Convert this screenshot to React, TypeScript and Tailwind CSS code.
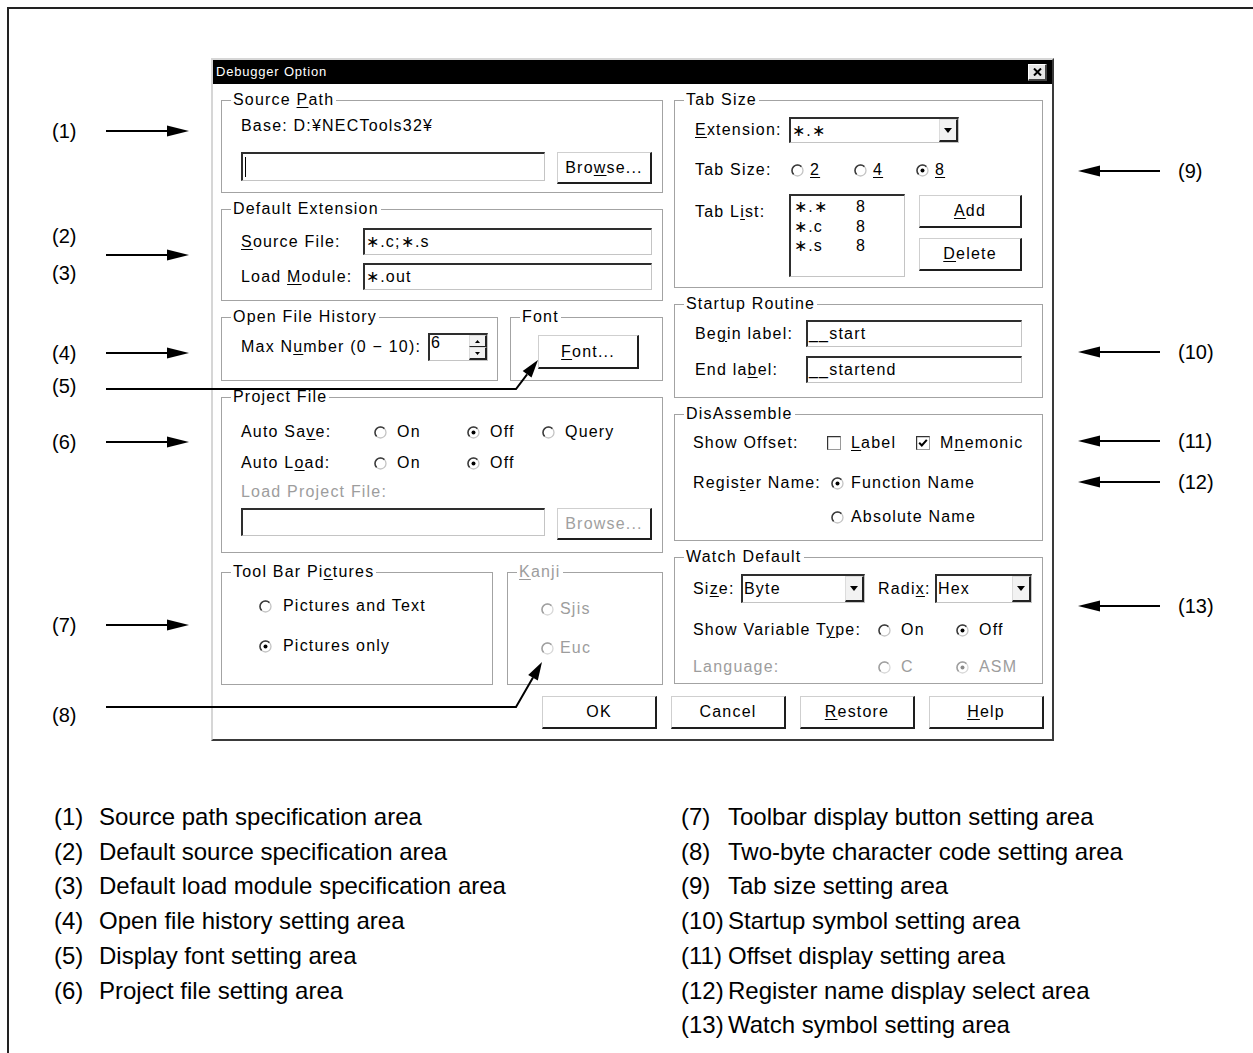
import React from "react";

const U = ({ children }: { children: React.ReactNode }) => (
  <span className="underline underline-offset-[2px] decoration-1">{children}</span>
);

function ArrowR() {
  return (
    <svg width="83" height="12" viewBox="0 0 83 12" className="shrink-0">
      <line x1="0" y1="6" x2="64" y2="6" stroke="#000" strokeWidth="2" />
      <path d="M61 0.5 L83 6 L61 11.5 Z" fill="#000" />
    </svg>
  );
}

function ArrowL() {
  return (
    <svg width="83" height="12" viewBox="0 0 83 12" className="shrink-0">
      <line x1="19" y1="6" x2="82" y2="6" stroke="#000" strokeWidth="2" />
      <path d="M22 0.5 L0 6 L22 11.5 Z" fill="#000" />
    </svg>
  );
}

function RadioIcon({ checked, disabled }: { checked?: boolean; disabled?: boolean }) {
  return (
    <svg width="13" height="13" viewBox="0 0 13 13" className="shrink-0">
      <circle cx="6.5" cy="6.5" r="5.5" fill="#fff" stroke={disabled ? "#d8d8d8" : "#c4c4c4"} strokeWidth="1.3" />
      <path d="M10.4 2.6 A5.5 5.5 0 0 0 2.6 10.4" fill="none" stroke={disabled ? "#a0a0a0" : "#3a3a3a"} strokeWidth="1.5" />
      {checked && <circle cx="6.5" cy="6.5" r="2" fill={disabled ? "#8a8a8a" : "#000"} />}
    </svg>
  );
}

function CheckIcon({ checked }: { checked?: boolean }) {
  return (
    <svg width="14" height="14" viewBox="0 0 14 14" className="shrink-0">
      <rect x="0.5" y="0.5" width="13" height="13" fill="#fff" stroke="#9a9a9a" />
      <path d="M0.5 13.5 V0.5 H13.5" fill="none" stroke="#333" strokeWidth="1.4" />
      {checked && <path d="M3.2 6.8 L5.8 9.5 L10.8 3.8" fill="none" stroke="#000" strokeWidth="2" />}
    </svg>
  );
}

function RadioItem({
  checked,
  disabled,
  label,
  className,
  gap,
}: {
  checked?: boolean;
  disabled?: boolean;
  label: React.ReactNode;
  className?: string;
  gap?: string;
}) {
  return (
    <div className={"flex items-center whitespace-nowrap " + (className ?? "")}>
      <RadioIcon checked={checked} disabled={disabled} />
      <span className={(gap ?? "ml-[10px]") + (disabled ? " text-[#9d9d9d]" : "")}>{label}</span>
    </div>
  );
}

function CheckItem({ checked, label, className }: { checked?: boolean; label: React.ReactNode; className?: string }) {
  return (
    <div className={"flex items-center whitespace-nowrap " + (className ?? "")}>
      <CheckIcon checked={checked} />
      <span className="ml-[10px]">{label}</span>
    </div>
  );
}

function Sunken({ className, children }: { className?: string; children?: React.ReactNode }) {
  return (
    <div
      className={
        "bg-white border-t-2 border-l-2 border-r border-b border-t-[#2e2e2e] border-l-[#2e2e2e] border-r-[#c4c4c4] border-b-[#c4c4c4] " +
        (className ?? "")
      }
    >
      {children}
    </div>
  );
}

function Field({ className, children, caret }: { className?: string; children?: React.ReactNode; caret?: boolean }) {
  return (
    <Sunken className={"flex items-center pl-[1px] whitespace-nowrap shrink-0 " + (className ?? "")}>
      {caret && <div className="w-[1px] h-[20px] bg-black ml-[1px]" />}
      {children}
    </Sunken>
  );
}

function DropBtn() {
  return (
    <div className="h-full w-[19px] shrink-0 bg-[#f2f2f2] border-t border-l border-t-[#dcdcdc] border-l-[#dcdcdc] border-r-2 border-b-2 border-r-[#222] border-b-[#222] flex items-center justify-center">
      <svg width="8" height="5" viewBox="0 0 8 5">
        <path d="M0 0 H8 L4 5 Z" fill="#000" />
      </svg>
    </div>
  );
}

function Combo({ value, className }: { value: string; className?: string }) {
  return (
    <Sunken className={"flex items-center justify-between shrink-0 " + (className ?? "")}>
      <span className="pl-[1px] whitespace-nowrap">{value}</span>
      <DropBtn />
    </Sunken>
  );
}

function Spinner() {
  return (
    <Sunken className="w-[60px] h-[28px] flex justify-between shrink-0">
      <span className="pl-[1px] leading-[16px]">6</span>
      <div className="w-[18px] h-full flex flex-col">
        <div className="flex-1 bg-[#f2f2f2] border-t border-l border-t-[#dcdcdc] border-l-[#dcdcdc] border-r-2 border-b border-r-[#222] border-b-[#222] flex items-center justify-center">
          <svg width="5" height="3" viewBox="0 0 5 3">
            <path d="M0 3 H5 L2.5 0 Z" fill="#000" />
          </svg>
        </div>
        <div className="flex-1 bg-[#f2f2f2] border-t border-l border-t-[#dcdcdc] border-l-[#dcdcdc] border-r-2 border-b-2 border-r-[#222] border-b-[#222] flex items-center justify-center">
          <svg width="5" height="3" viewBox="0 0 5 3">
            <path d="M0 0 H5 L2.5 3 Z" fill="#000" />
          </svg>
        </div>
      </div>
    </Sunken>
  );
}

function Btn({ children, className, disabled }: { children: React.ReactNode; className?: string; disabled?: boolean }) {
  return (
    <div
      className={
        "flex items-center justify-center shrink-0 whitespace-nowrap bg-white border-t border-l border-t-[#cfcfcf] border-l-[#cfcfcf] border-r-2 border-b-2 border-r-[#1e1e1e] border-b-[#1e1e1e] " +
        (disabled ? "text-[#a0a0a0] " : "") +
        (className ?? "")
      }
    >
      {children}
    </div>
  );
}

function Group({
  title,
  className,
  children,
  disabled,
}: {
  title: React.ReactNode;
  className?: string;
  children?: React.ReactNode;
  disabled?: boolean;
}) {
  return (
    <div className={"relative border border-[#a3a3a3] shrink-0 " + (className ?? "")}>
      <span
        className={
          "absolute left-[9px] top-[-10px] bg-white px-[2px] leading-[18px] whitespace-nowrap " +
          (disabled ? "text-[#9d9d9d]" : "")
        }
      >
        {title}
      </span>
      {children}
    </div>
  );
}

function Dialog() {
  return (
    <div className="w-[843px] h-[683px] shrink-0 flex flex-col bg-white border-2 border-t-[#d6d6d6] border-l-[#d6d6d6] border-r-[#3a3a3a] border-b-[#3a3a3a] text-[16px] tracking-[1.2px] leading-[18px] font-['Liberation_Sans',Arial,sans-serif]">
      <div className="h-[24px] bg-black flex items-center justify-between pl-[3px] pr-[5px]">
        <span className="text-white text-[13px] tracking-[0.8px]">Debugger Option</span>
        <div className="w-[19px] h-[17px] bg-[#e6e6e6] border-t border-l border-t-white border-l-white border-r-2 border-b-2 border-r-[#444] border-b-[#444] flex items-center justify-center">
          <svg width="9" height="8" viewBox="0 0 9 8">
            <path d="M1 0.5 L8 7.5 M8 0.5 L1 7.5" stroke="#000" strokeWidth="2" />
          </svg>
        </div>
      </div>
      <div className="flex-1 px-[8px]">
        <div className="flex gap-[11px] mt-[16px]">
          {/* left column */}
          <div className="w-[442px] flex flex-col">
            <Group
              title={
                <>
                  Source <U>P</U>ath
                </>
              }
              className="h-[93px] pt-[16px] pl-[19px]"
            >
              <div className="whitespace-nowrap">Base: D:¥NECTools32¥</div>
              <div className="flex items-start gap-[12px] mt-[17px]">
                <Field className="w-[304px] h-[29px]" caret />
                <Btn className="w-[95px] h-[32px]">
                  Bro<U>w</U>se...
                </Btn>
              </div>
            </Group>

            <Group title="Default Extension" className="mt-[16px] h-[92px] pt-[18px] pl-[19px]">
              <div className="flex items-center h-[27px]">
                <span className="w-[122px] whitespace-nowrap">
                  <U>S</U>ource File:
                </span>
                <Field className="w-[289px] h-[27px]">∗.c;∗.s</Field>
              </div>
              <div className="flex items-center h-[27px] mt-[8px]">
                <span className="w-[122px] whitespace-nowrap">
                  Load <U>M</U>odule:
                </span>
                <Field className="w-[289px] h-[27px]">∗.out</Field>
              </div>
            </Group>

            <div className="flex gap-[12px] mt-[16px] h-[64px]">
              <Group title="Open File History" className="w-[277px] h-full pt-[15px] pl-[19px]">
                <div className="flex items-center">
                  <span className="w-[187px] whitespace-nowrap">
                    Max N<U>u</U>mber (0 − 10):
                  </span>
                  <Spinner />
                </div>
              </Group>
              <Group title="Font" className="flex-1 h-full pt-[17px] pl-[27px]">
                <Btn className="w-[101px] h-[34px]">
                  <U>F</U>ont...
                </Btn>
              </Group>
            </div>

            <Group title="Project File" className="mt-[16px] h-[156px] pt-[25px] pl-[19px]">
              <div className="flex items-center h-[18px]">
                <span className="w-[133px] whitespace-nowrap">
                  Auto Sa<U>v</U>e:
                </span>
                <RadioItem className="w-[93px]" label="On" />
                <RadioItem className="w-[75px]" checked label="Off" />
                <RadioItem label="Query" />
              </div>
              <div className="flex items-center h-[18px] mt-[13px]">
                <span className="w-[133px] whitespace-nowrap">
                  Auto L<U>o</U>ad:
                </span>
                <RadioItem className="w-[93px]" label="On" />
                <RadioItem checked label="Off" />
              </div>
              <div className="h-[18px] mt-[11px] text-[#9d9d9d] whitespace-nowrap">Load Project File:</div>
              <div className="flex items-start gap-[12px] mt-[7px]">
                <Field className="w-[304px] h-[28px]" />
                <Btn disabled className="w-[95px] h-[32px]">
                  Browse...
                </Btn>
              </div>
            </Group>

            <div className="flex gap-[14px] mt-[19px] h-[113px]">
              <Group
                title={
                  <>
                    Tool Bar Pi<U>c</U>tures
                  </>
                }
                className="w-[272px] h-full pt-[24px] pl-[37px]"
              >
                <RadioItem className="h-[18px]" gap="ml-[11px]" label="Pictures and Text" />
                <RadioItem className="h-[18px] mt-[22px]" gap="ml-[11px]" checked label="Pictures only" />
              </Group>
              <Group
                disabled
                title={
                  <>
                    <U>K</U>anji
                  </>
                }
                className="flex-1 h-full pt-[27px] pl-[33px]"
              >
                <RadioItem className="h-[18px]" disabled gap="ml-[6px]" label="Sjis" />
                <RadioItem className="h-[18px] mt-[21px]" disabled gap="ml-[6px]" label="Euc" />
              </Group>
            </div>
          </div>

          {/* right column */}
          <div className="w-[369px] flex flex-col">
            <Group title="Tab Size" className="h-[188px] pt-[16px] pl-[20px]">
              <div className="flex items-center h-[26px]">
                <span className="w-[94px] whitespace-nowrap">
                  <U>E</U>xtension:
                </span>
                <Combo className="w-[170px] h-[26px]" value="∗.∗" />
              </div>
              <div className="flex items-center h-[18px] mt-[18px]">
                <span className="w-[96px] whitespace-nowrap">Tab Size:</span>
                <RadioItem className="w-[63px]" gap="ml-[6px]" label={<U>2</U>} />
                <RadioItem className="w-[62px]" gap="ml-[6px]" label={<U>4</U>} />
                <RadioItem checked gap="ml-[6px]" label={<U>8</U>} />
              </div>
              <div className="flex mt-[15px]">
                <span className="w-[94px] mt-[9px] whitespace-nowrap">
                  Tab L<U>i</U>st:
                </span>
                <Sunken className="w-[116px] h-[83px] pl-[3px] pt-[1px] leading-[19.5px] shrink-0">
                  {[
                    ["∗.∗", "8"],
                    ["∗.c", "8"],
                    ["∗.s", "8"],
                  ].map(([a, b]) => (
                    <div key={a} className="flex">
                      <span className="w-[62px]">{a}</span>
                      <span>{b}</span>
                    </div>
                  ))}
                </Sunken>
                <div className="flex flex-col ml-[14px] gap-[10px] pt-[1px]">
                  <Btn className="w-[103px] h-[33px]">
                    <U>A</U>dd
                  </Btn>
                  <Btn className="w-[103px] h-[33px]">
                    <U>D</U>elete
                  </Btn>
                </div>
              </div>
            </Group>

            <Group title="Startup Routine" className="mt-[16px] h-[94px] pt-[15px] pl-[20px]">
              <div className="flex items-center h-[27px]">
                <span className="w-[111px] whitespace-nowrap">
                  Be<U>g</U>in label:
                </span>
                <Field className="w-[216px] h-[27px]">__start</Field>
              </div>
              <div className="flex items-center h-[27px] mt-[9px]">
                <span className="w-[111px] whitespace-nowrap">
                  End la<U>b</U>el:
                </span>
                <Field className="w-[216px] h-[27px]">__startend</Field>
              </div>
            </Group>

            <Group title="DisAssemble" className="mt-[16px] h-[127px] pt-[19px] pl-[18px]">
              <div className="flex items-center h-[18px]">
                <span className="w-[134px] whitespace-nowrap">Show Offset:</span>
                <CheckItem
                  className="w-[89px]"
                  label={
                    <>
                      <U>L</U>abel
                    </>
                  }
                />
                <CheckItem
                  checked
                  label={
                    <>
                      M<U>n</U>emonic
                    </>
                  }
                />
              </div>
              <div className="flex items-center h-[18px] mt-[22px]">
                <span className="w-[138px] whitespace-nowrap">
                  Regis<U>t</U>er Name:
                </span>
                <RadioItem checked gap="ml-[7px]" label="Function Name" />
              </div>
              <div className="flex items-center h-[18px] mt-[16px] pl-[138px]">
                <RadioItem gap="ml-[7px]" label="Absolute Name" />
              </div>
            </Group>

            <Group title="Watch Default" className="mt-[16px] h-[127px] pt-[16px] pl-[18px]">
              <div className="flex items-center h-[29px]">
                <span className="w-[48px] whitespace-nowrap">
                  Si<U>z</U>e:
                </span>
                <Combo className="w-[124px] h-[29px]" value="Byte" />
                <span className="ml-[13px] w-[57px] whitespace-nowrap">
                  Radi<U>x</U>:
                </span>
                <Combo className="w-[97px] h-[29px]" value="Hex" />
              </div>
              <div className="flex items-center h-[18px] mt-[18px]">
                <span className="w-[185px] whitespace-nowrap">
                  Show Variable T<U>y</U>pe:
                </span>
                <RadioItem className="w-[78px]" label="On" />
                <RadioItem checked label="Off" />
              </div>
              <div className="flex items-center h-[18px] mt-[19px]">
                <span className="w-[185px] whitespace-nowrap text-[#9d9d9d]">Language:</span>
                <RadioItem className="w-[78px]" disabled label="C" />
                <RadioItem disabled checked label="ASM" />
              </div>
            </Group>
          </div>
        </div>

        <div className="flex justify-end gap-[14px] mt-[11px]">
          <Btn className="w-[115px] h-[33px]">OK</Btn>
          <Btn className="w-[115px] h-[33px]">Cancel</Btn>
          <Btn className="w-[115px] h-[33px]">
            <U>R</U>estore
          </Btn>
          <Btn className="w-[115px] h-[33px]">
            <U>H</U>elp
          </Btn>
        </div>
      </div>
    </div>
  );
}

function Note({ label, arrow, className }: { label: string; arrow?: boolean; className?: string }) {
  return (
    <div className={"flex items-center h-[20px] " + (className ?? "")}>
      <span className="w-[54px] leading-[20px]">{label}</span>
      {arrow && <ArrowR />}
    </div>
  );
}

function LeftNotes() {
  return (
    <div className="w-[202px] shrink-0 flex flex-col pl-[43px] text-[20px]">
      <Note className="mt-[63px]" label="(1)" arrow />
      <div className="mt-[85px] flex h-[57px]">
        <div className="w-[54px] flex flex-col justify-between">
          <span className="h-[20px] leading-[20px]">(2)</span>
          <span className="h-[20px] leading-[20px]">(3)</span>
        </div>
        <div className="self-center flex">
          <ArrowR />
        </div>
      </div>
      <Note className="mt-[60px]" label="(4)" arrow />
      <Note className="mt-[13px]" label="(5)" />
      <Note className="mt-[36px]" label="(6)" arrow />
      <Note className="mt-[163px]" label="(7)" arrow />
      <Note className="mt-[70px]" label="(8)" />
    </div>
  );
}

function RNote({ label, className }: { label: string; className?: string }) {
  return (
    <div className={"flex items-center h-[20px] " + (className ?? "")}>
      <ArrowL />
      <span className="ml-[17px] leading-[20px]">{label}</span>
    </div>
  );
}

function RightNotes() {
  return (
    <div className="flex-1 flex flex-col pl-[24px] text-[20px]">
      <RNote className="mt-[103px]" label="(9)" />
      <RNote className="mt-[161px]" label="(10)" />
      <RNote className="mt-[69px]" label="(11)" />
      <RNote className="mt-[21px]" label="(12)" />
      <RNote className="mt-[104px]" label="(13)" />
    </div>
  );
}

const leftItems = [
  ["(1)", "Source path specification area"],
  ["(2)", "Default source specification area"],
  ["(3)", "Default load module specification area"],
  ["(4)", "Open file history setting area"],
  ["(5)", "Display font setting area"],
  ["(6)", "Project file setting area"],
];
const rightItems = [
  ["(7)", "Toolbar display button setting area"],
  ["(8)", "Two-byte character code setting area"],
  ["(9)", "Tab size setting area"],
  ["(10)", "Startup symbol setting area"],
  ["(11)", "Offset display setting area"],
  ["(12)", "Register name display select area"],
  ["(13)", "Watch symbol setting area"],
];

function Legend() {
  return (
    <div className="mt-[59px] flex text-[24px] leading-[34.7px]">
      <div className="w-[672px] pl-[45px]">
        {leftItems.map(([n, t]) => (
          <div key={n} className="flex whitespace-nowrap">
            <span className="w-[45px]">{n}</span>
            <span>{t}</span>
          </div>
        ))}
      </div>
      <div>
        {rightItems.map(([n, t]) => (
          <div key={n} className="flex whitespace-nowrap">
            <span className="w-[47px]">{n}</span>
            <span>{t}</span>
          </div>
        ))}
      </div>
    </div>
  );
}

function Leaders() {
  return (
    <svg className="absolute left-0 top-0 pointer-events-none" width="1253" height="1053" viewBox="0 0 1253 1053">
      <polyline points="106,389 516,389 527.1,374.3" fill="none" stroke="#000" strokeWidth="2" />
      <path d="M538 360 L531.5 377.6 L522.7 371 Z" fill="#000" />
      <polyline points="106,707 516,707 533,677.6" fill="none" stroke="#000" strokeWidth="2" />
      <path d="M542 662 L537.8 680.4 L528.2 674.9 Z" fill="#000" />
    </svg>
  );
}

export default function App() {
  return (
    <div className="relative w-[1253px] h-[1053px] overflow-hidden bg-white text-black font-['Liberation_Sans',Arial,sans-serif]">
      <div className="ml-[7px] mt-[7px] h-[1046px] border-l-2 border-t-2 border-[#222]">
        <div className="flex pt-[49px]">
          <LeftNotes />
          <Dialog />
          <RightNotes />
        </div>
        <Legend />
      </div>
      <Leaders />
    </div>
  );
}
